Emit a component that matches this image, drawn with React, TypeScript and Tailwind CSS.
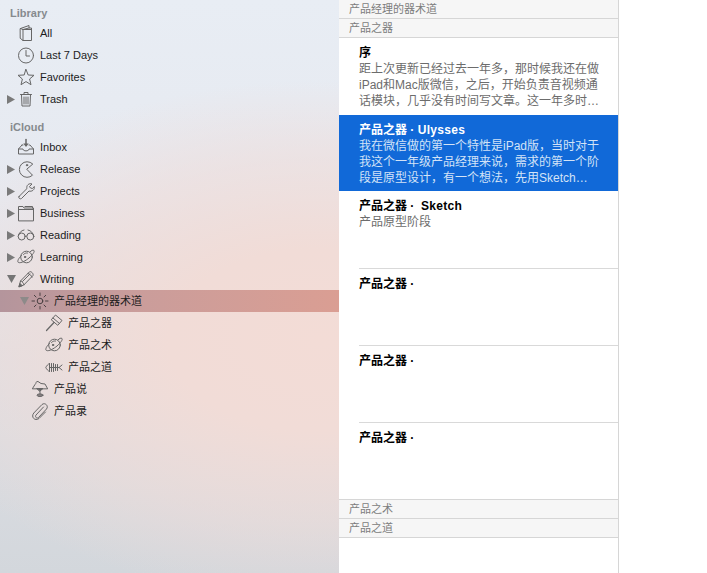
import React from "react";

const S = ({ children }: { children: React.ReactNode }) => (
  <svg width="18" height="18" viewBox="0 0 18 18" fill="none" stroke="#666666" strokeWidth="1" strokeLinecap="round" strokeLinejoin="round" className="shrink-0">
    {children}
  </svg>
);

const icons: Record<string, React.ReactNode> = {
  book: <><path d="M3.5 4.5 L12 1.500 V4 H14.500 V16.500 H6 L3.5 14.500 Z" /><path d="M6 16.500 V5.500 L3.5 4.5 M6 5.500 L12 4 M6 5.500 H14.500" /></>,
  clock: <><circle cx="9" cy="9.5" r="7.5" /><path d="M9 4.5 V10 H12.5" /></>,
  star: <path d="M9 1.5 L11.2 7 L17 7.3 L12.6 11 L14 16.7 L9 13.6 L4 16.7 L5.4 11 L1 7.3 L6.8 7 Z" />,
  trash: <><path d="M3.5 4.5 H14.5 M7 4.5 V2.5 H11 V4.5 M4.5 4.5 L5 16 H13 L13.5 4.5" /><path d="M7 7 V14 M9 7 V14 M11 7 V14" /></>,
  inbox: <><path d="M5 7 L1.5 11 V16 H16.5 V11 L13 7 H12 M6 7 H5" /><path d="M1.5 11 H6 C6 13.5 12 13.5 12 11 H16.5" /><path d="M9 1.5 V7" strokeWidth="1.500" /><path d="M6.300 5.500 H11.700 L9 9 Z" fill="#666666" stroke="none" /></>,
  pacman: <><path d="M15.500 3.800 A7.800 7.800 0 1 0 15.500 15.200 L10 9.500 Z" /><circle cx="10" cy="5.200" r="0.700" fill="#666666" /></>,
  wrench: <path d="M2 14.5 L10 6.5 C9 3.5 12 0.8 15 2 L12.5 4.5 L13.5 6 L15.5 6.5 L17.3 4.5 C18 7.5 15 10 12 9 L4.5 16.5 C3 17.5 1 16 2 14.5 Z" />,
  folder: <><path d="M1.5 16.5 V2.5 H6 L7 4 H16.5 V16.5 Z" /><path d="M1.5 5.5 H16.5" /><path d="M8 2.5 H15.500 V4" /></>,
  glasses: <><circle cx="4.700" cy="10.500" r="3.500" /><circle cx="13.300" cy="10.500" r="3.500" /><path d="M8.200 10.300 C8.700 9.800 9.300 9.800 9.800 10.300 M1.200 10 C2 7 4 4.500 7 4 M16.800 10 C16 7 14 4.500 11 4" /></>,
  planet: <><circle cx="9.500" cy="9" r="5.800" /><path d="M4.500 7.500 C1 10.500 0 14 1.500 14.500 C4 15.500 9 12.500 12 10 C15.500 7 18 3.500 17 2.500 C16 1.700 14.500 2.300 13 4" /><path d="M6.500 6.500 C7.500 5.300 9 4.800 10.500 5" /><circle cx="8" cy="9" r="0.700" fill="#666666" /></>,
  pencil: <><path d="M2 16.500 L3.500 11 L12.500 1.800 C14 1 16.800 3.500 16 5.500 L7 14.800 Z" /><path d="M3.500 11 C5 11 6.500 13 7 14.800 M11 3.500 C13 4 14.500 5.500 15 7.300 M5.500 11.500 L13 4" /><path d="M2 16.500 L3 13.500 L5 15.500 Z" fill="#666666" /></>,
  sun: <><circle cx="9" cy="9" r="2.800" stroke="#4a4042" /><path d="M9 1 V3.500 M9 14.500 V17 M1 9 H3.500 M14.500 9 H17 M3.300 3.300 L5 5 M13 13 L14.700 14.700 M3.300 14.700 L5 13 M13 5 L14.700 3.300" stroke="#4a4042" /></>,
  gavel: <><path d="M6.500 5.500 L10.500 1 L17 6.500 L13 11 Z" /><path d="M8 4 L14.500 9.500" /><path d="M9 8.500 L1.500 16.500" strokeWidth="1.200" /></>,
  fish: <><path d="M4.500 5.500 C3 6 1.500 8 0.800 9.500 C1.500 11 3 13 4.500 13.500" /><path d="M4.500 5.500 V13.500 M4.500 9.500 H14 M6.500 5.500 V13.500 M8.500 5.500 V13.500 M10.500 6.500 V12.500 M12.500 6.500 V12.500 M17 7 L14 9.500 L17 12" /></>,
  lamp: <><path d="M1.500 8.500 L4 4.500 C5.500 3.500 4.500 1 7 1.500 L10 3.500 L14 4 L16.500 8.500 Z" /><path d="M6 8.500 H12 L9 11 Z" fill="#666666" /><path d="M9 8.500 V14" /><ellipse cx="9" cy="15.200" rx="3" ry="1.300" fill="#8a8284" /></>,
  clip: <path d="M12.500 5 L5 13 C3.500 15 6 17 7.500 15.500 L15.500 7 C18 4 14 0 11 2.500 L2.800 11 C-0.500 15 4 19.500 8 16.500 L14.500 10" />,
};

const Tri = ({ open, light }: { open?: boolean; light?: boolean }) =>
  open ? (
    <svg width="9" height="8" viewBox="0 0 9 8" className="shrink-0"><path d="M0 0 H9 L4.500 8 Z" fill={light ? "#8d8a89" : "#757575"} /></svg>
  ) : (
    <svg width="8" height="9" viewBox="0 0 8 9" className="shrink-0"><path d="M0 0 L8 4.500 L0 9 Z" fill="#7a7a7a" /></svg>
  );

const Top = ({ icon, label, tri }: { icon: string; label: string; tri?: "open" | "closed" }) => (
  <div className="flex h-[22px] items-center pl-[7px] text-[11px] text-[#1c1c1c]">
    <span className="flex w-[10px] shrink-0 items-center">{tri && <Tri open={tri === "open"} />}</span>
    <span className="flex w-[23px] shrink-0 items-center"><S>{icons[icon]}</S></span>
    <span>{label}</span>
  </div>
);

const Sub = ({ icon, label }: { icon: string; label: string }) => (
  <div className="flex h-[22px] items-center pl-[31px] text-[11px] text-[#1c1c1c]">
    <span className="flex w-[23px] shrink-0 items-center"><S>{icons[icon]}</S></span>
    <span>{label}</span>
  </div>
);

const Sub2 = ({ icon, label }: { icon: string; label: string }) => (
  <div className="flex h-[22px] items-center pl-[45px] text-[11px] text-[#1c1c1c]">
    <span className="flex w-[23px] shrink-0 items-center"><S>{icons[icon]}</S></span>
    <span>{label}</span>
  </div>
);

const Bar = ({ label }: { label: string }) => (
  <div className="flex h-[19px] items-center border-b border-[#d6d6d6] bg-[#f6f6f6] pl-[10px] text-[11px] text-[#7d7d7d]">{label}</div>
);

const Note = ({ title, latin, lines, sel }: { title: string; latin?: string; lines: string[]; sel?: boolean }) => (
  <div className={sel ? "h-[76px] bg-[#1169d8] pl-[20px] pt-[7px]" : "h-[77px] pl-[20px] pt-[7px]"}>
    <div className={sel ? "h-[16px] whitespace-pre text-[12px] leading-[16px] font-bold text-white" : "h-[16px] whitespace-pre text-[12px] leading-[16px] font-bold text-black"}>
      {title}
      {latin && <span className="tracking-[0.3px]">{latin}</span>}
    </div>
    {lines.map((l) => (
      <div key={l} className={sel ? "h-[16px] whitespace-nowrap text-[12px] leading-[16px] text-[#d3e3f7]" : "h-[16px] whitespace-nowrap text-[12px] leading-[16px] text-[#6c6c6c]"}>{l}</div>
    ))}
  </div>
);

const Empty = () => (
  <div className="h-[76px] pl-[20px] pt-[7px] text-[12px] leading-[16px] font-bold text-black">产品之器 ·</div>
);

const Rule = () => <div className="ml-[20px] h-px bg-[#d9d9d9]" />;

export default function App() {
  return (
    <div className="flex h-[573px] w-[707px] overflow-hidden bg-white font-['Liberation_Sans','Noto_Sans_CJK_SC',sans-serif]">
      <aside className="h-full w-[339px] shrink-0 bg-[radial-gradient(ellipse_430px_260px_at_320px_340px,#f3dcd6_0%,#f1dcd7_35%,rgba(240,220,216,0.55)_70%,rgba(240,220,216,0)_100%),linear-gradient(180deg,#e8edf4_0%,#e6e9f0_35%,#dfe0e5_60%,#d3d7dc_100%)]">
        <div className="flex h-[22px] items-start pl-[10px] pt-[6px] text-[11px] leading-[14px] font-bold text-[#868a8e]">Library</div>
        <Top icon="book" label="All" />
        <Top icon="clock" label="Last 7 Days" />
        <Top icon="star" label="Favorites" />
        <Top icon="trash" label="Trash" tri="closed" />
        <div className="flex h-[26px] items-end pb-[2px] pl-[10px] text-[11px] leading-[14px] font-bold text-[#868a8e]">iCloud</div>
        <Top icon="inbox" label="Inbox" />
        <Top icon="pacman" label="Release" tri="closed" />
        <Top icon="wrench" label="Projects" tri="closed" />
        <Top icon="folder" label="Business" tri="closed" />
        <Top icon="glasses" label="Reading" tri="closed" />
        <Top icon="planet" label="Learning" tri="closed" />
        <Top icon="pencil" label="Writing" tri="open" />
        <div className="flex h-[22px] items-center bg-[linear-gradient(90deg,#b4959c_0%,#ca9d9b_40%,#da9e93_100%)] pl-[20px] text-[11px] text-[#1c1c1c]">
          <span className="flex w-[11px] shrink-0 items-center"><Tri open light /></span>
          <span className="flex w-[23px] shrink-0 items-center"><S>{icons.sun}</S></span>
          <span>产品经理的器术道</span>
        </div>
        <Sub2 icon="gavel" label="产品之器" />
        <Sub2 icon="planet" label="产品之术" />
        <Sub2 icon="fish" label="产品之道" />
        <Sub icon="lamp" label="产品说" />
        <Sub icon="clip" label="产品录" />
      </aside>
      <main className="h-full w-[280px] shrink-0 border-r border-[#d6d6d6] bg-white">
        <Bar label="产品经理的器术道" />
        <Bar label="产品之器" />
        <Note title="序" lines={["距上次更新已经过去一年多，那时候我还在做", "iPad和Mac版微信，之后，开始负责音视频通", "话模块，几乎没有时间写文章。这一年多时…"]} />
        <Note sel title="产品之器 · " latin="Ulysses" lines={["我在微信做的第一个特性是iPad版，当时对于", "我这个一年级产品经理来说，需求的第一个阶", "段是原型设计，有一个想法，先用Sketch…"]} />
        <Note title="产品之器 ·  " latin="Sketch" lines={["产品原型阶段"]} />
        <Rule />
        <Empty />
        <Rule />
        <Empty />
        <Rule />
        <Empty />
        <div className="h-px bg-[#d6d6d6]" />
        <Bar label="产品之术" />
        <Bar label="产品之道" />
      </main>
    </div>
  );
}
